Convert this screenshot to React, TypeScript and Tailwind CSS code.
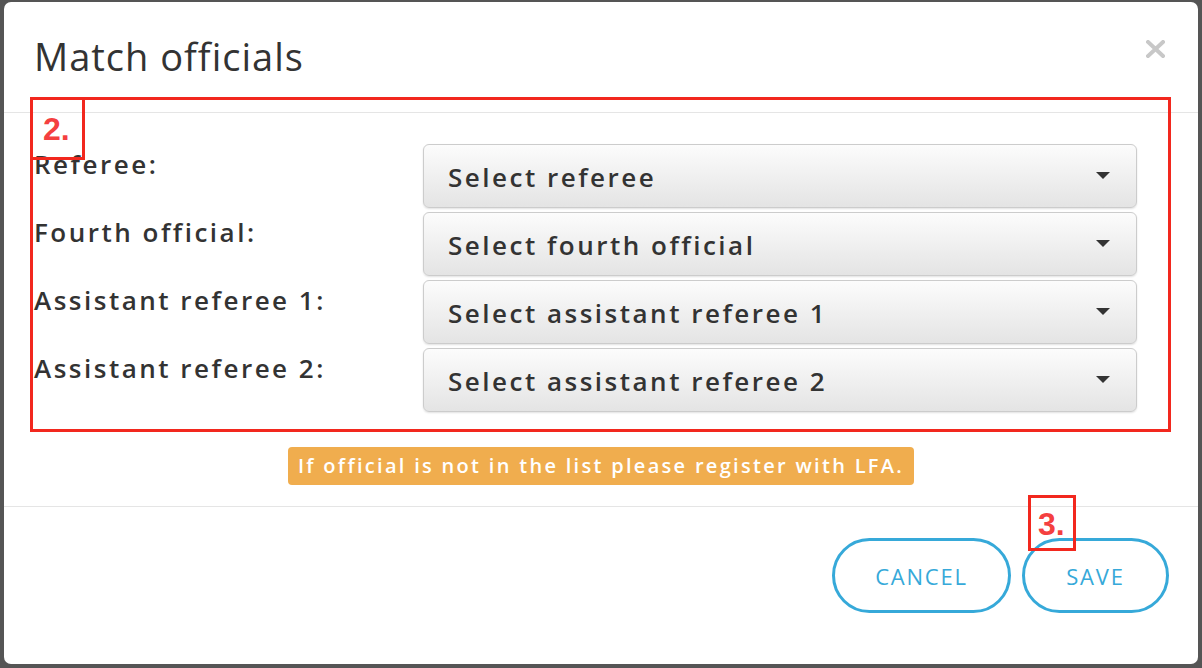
import React from "react";

const rows = [
  { label: "Referee:", placeholder: "Select referee" },
  { label: "Fourth official:", placeholder: "Select fourth official" },
  { label: "Assistant referee 1:", placeholder: "Select assistant referee 1" },
  { label: "Assistant referee 2:", placeholder: "Select assistant referee 2" },
];

function Caret() {
  return (
    <svg width="14" height="8" viewBox="0 0 14 8" className="shrink-0">
      <path d="M0 0 H14 L7 7 Z" fill="#333" />
    </svg>
  );
}

export default function App() {
  return (
    <div className="w-[1202px] h-[668px] bg-[#555] pl-[4px] pr-[4px] pt-[2px] pb-[4px] font-['Open_Sans',sans-serif]">
      <div className="relative w-full h-full bg-white rounded-[7px] flex flex-col">
        {/* Header */}
        <div className="h-[111px] border-b border-[#e5e5e5] flex items-start justify-between pl-[30px] pr-[33px] pt-[32px]">
          <h1 className="text-[38px] leading-[44px] text-[#333] tracking-[1px]">Match officials</h1>
          <svg width="19" height="18" viewBox="0 0 19 18" className="mt-[6px]" aria-label="Close">
            <path d="M2 2 L17 16 M17 2 L2 16" stroke="#c8c8c8" strokeWidth="4" strokeLinecap="square" />
          </svg>
        </div>

        {/* Body */}
        <div className="pt-[31px] pl-[30px] pr-[61px] flex flex-col gap-[4px]">
          {rows.map((r) => (
            <div key={r.label} className="flex items-start">
              <label className="w-[389px] pt-[3px] text-[26px] leading-[34px] font-semibold tracking-[2.5px] text-[#333]">
                {r.label}
              </label>
              <button className="flex-1 h-[64px] flex items-center justify-between pl-[24px] pr-[26px] rounded-[6px] border border-[#ccc] bg-gradient-to-b from-[#fcfcfc] to-[#e4e4e4] shadow-[0_1px_2px_rgba(0,0,0,0.12)]">
                <span className="text-[26px] font-semibold tracking-[2.5px] text-[#333] pt-[2px]">{r.placeholder}</span>
                <Caret />
              </button>
            </div>
          ))}
        </div>

        <div className="flex justify-center pt-[35px] pb-[21px] border-b border-[#e5e5e5]">
          <span className="bg-[#f0ad4e] text-white text-[20px] font-semibold tracking-[2.3px] rounded-[4px] px-[10px] h-[38px] flex items-center">
            If official is not in the list please register with LFA.
          </span>
        </div>

        {/* Footer */}
        <div className="flex justify-end gap-[11px] pt-[31px] pr-[29px]">
          <button className="w-[179px] h-[75px] rounded-full border-[3px] border-[#36a9d9] text-[#36a9d9] text-[22px] tracking-[1.8px] pt-[2px]">
            CANCEL
          </button>
          <button className="w-[147px] h-[75px] rounded-full border-[3px] border-[#36a9d9] text-[#36a9d9] text-[22px] tracking-[1.8px] pt-[2px]">
            SAVE
          </button>
        </div>

        {/* Annotations */}
        <div className="absolute left-[26px] top-[95px] w-[1141px] h-[335px] border-[3px] border-[#f2281e]" />
        <div className="absolute left-[26px] top-[95px] w-[55px] h-[63px] border-[3px] border-[#f2281e] pl-[10px] pt-[13px]">
          <span className="block font-['Liberation_Sans',sans-serif] font-bold text-[32px] leading-none text-[#f44040]">2.</span>
        </div>
        <div className="absolute left-[1024px] top-[493px] w-[48px] h-[56px] border-[3px] border-[#f2281e] pl-[7px] pt-[10px]">
          <span className="block font-['Liberation_Sans',sans-serif] font-bold text-[32px] leading-none text-[#f44040]">3.</span>
        </div>
      </div>
    </div>
  );
}
